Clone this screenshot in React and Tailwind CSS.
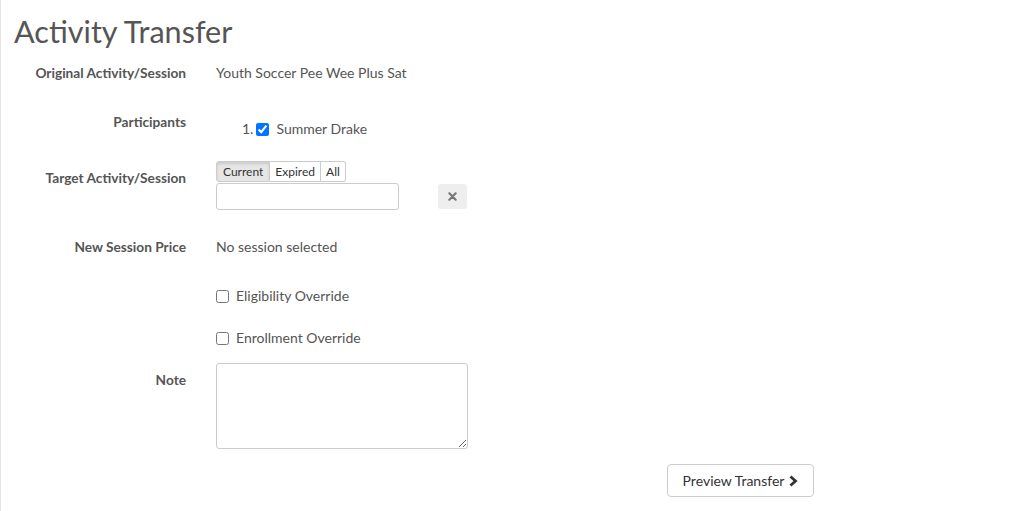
import React from "react";

const Label = ({ children, className = "" }) => (
  <div className={`w-[186px] shrink-0 text-right font-bold text-[13.7px] text-[#555] ${className}`}>
    {children}
  </div>
);

export default function App() {
  return (
    <div className="w-[1026px] h-[511px] bg-white shadow-[inset_1px_0_0_#e5e5e5] font-['Lato','Liberation_Sans',sans-serif] text-[14px] text-[#555] overflow-hidden">
      <h1 className="pl-[14px] pt-[12px] text-[30.6px] leading-[40px] text-[#555] font-normal">
        Activity Transfer
      </h1>

      {/* Original */}
      <div className="flex mt-[11px] leading-[20px]">
        <Label>Original Activity/Session</Label>
        <div className="ml-[30px]">Youth Soccer Pee Wee Plus Sat</div>
      </div>

      {/* Participants */}
      <div className="flex mt-[29px] leading-[20px]">
        <Label>Participants</Label>
        <div className="ml-[56px] mt-[7px] flex items-center">
          <span>1.</span>
          <input type="checkbox" defaultChecked className="ml-[3px] w-[13px] h-[13px] accent-[#0075ff]" />
          <span className="ml-[7px]">Summer Drake</span>
        </div>
      </div>

      {/* Target */}
      <div className="flex mt-[22px]">
        <Label className="mt-[7px] leading-[20px]">Target Activity/Session</Label>
        <div className="ml-[30px]">
          <div className="flex text-[12px] leading-[19px] text-[#333]">
            <button className="px-[6px] border border-[#ccc] rounded-l-[3px] bg-[#e6e6e6] shadow-[inset_0_2px_3px_rgba(0,0,0,0.12)]">Current</button>
            <button className="px-[5px] border border-l-0 border-[#ccc] bg-white">Expired</button>
            <button className="px-[5px] border border-l-0 border-[#ccc] rounded-r-[3px] bg-white">All</button>
          </div>
          <div className="flex items-center mt-[1px]">
            <input type="text" className="w-[183px] h-[27px] border border-[#ccc] rounded-[3px]" />
            <button className="ml-[39px] w-[29px] h-[25px] rounded-[3px] bg-[#eee] flex items-center justify-center">
              <svg width="9" height="9" viewBox="0 0 10 10">
                <path d="M1.5 1.5 L8.5 8.5 M8.5 1.5 L1.5 8.5" stroke="#777" strokeWidth="2.4" strokeLinecap="round" />
              </svg>
            </button>
          </div>
        </div>
      </div>

      {/* Price */}
      <div className="flex mt-[27px] leading-[20px]">
        <Label>New Session Price</Label>
        <div className="ml-[30px]">No session selected</div>
      </div>

      {/* Overrides */}
      <div className="ml-[216px] mt-[29px] flex items-center leading-[20px]">
        <input type="checkbox" className="w-[13px] h-[13px]" />
        <span className="ml-[7px]">Eligibility Override</span>
      </div>
      <div className="ml-[216px] mt-[22px] flex items-center leading-[20px]">
        <input type="checkbox" className="w-[13px] h-[13px]" />
        <span className="ml-[7px]">Enrollment Override</span>
      </div>

      {/* Note */}
      <div className="flex mt-[15px]">
        <Label className="mt-[7px] leading-[20px]">Note</Label>
        <textarea className="ml-[30px] w-[252px] h-[86px] border border-[#ccc] rounded-[3px]" />
      </div>

      <div className="flex mt-[15px] ml-[667px]">
        <button className="h-[33px] w-[147px] justify-center border border-[#ccc] rounded-[4px] bg-white text-[#333] flex items-center gap-[5px]">
          Preview Transfer
          <svg width="9" height="12" viewBox="0 0 9 12">
            <path d="M1.5 1.5 L6.5 6 L1.5 10.5" fill="none" stroke="#333" strokeWidth="2.8" />
          </svg>
        </button>
      </div>
    </div>
  );
}
